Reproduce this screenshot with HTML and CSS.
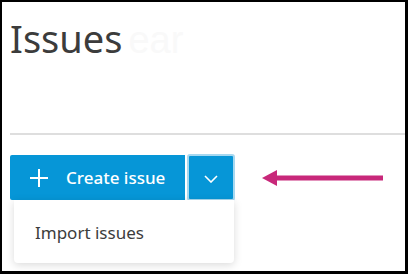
FILE: index.html
```html
<!DOCTYPE html>
<html lang="en">
<head>
  <meta charset="UTF-8">
  <title>Issues</title>
  <link rel="stylesheet" href="styles.css">
</head>
<body>
  <div class="frame">
    <header class="page-head">
      <h1>Issues<span class="ghost">ear</span></h1>
    </header>
    <div class="toolbar">
      <div class="split">
        <button class="create-btn">
          <svg width="18" height="18" viewBox="0 0 18 18"><path d="M9 0v18M0 9h18" stroke="#fff" stroke-width="2"/></svg>
          <span>Create issue</span>
        </button>
        <button class="toggle-btn">
          <svg width="14" height="8" viewBox="0 0 14 8"><path d="M1 1l6 6 6-6" fill="none" stroke="#fff" stroke-width="1.6"/></svg>
        </button>
        <div class="menu">
          <a href="#">Import issues</a>
        </div>
      </div>
      <svg class="arrow" width="121" height="16" viewBox="0 0 121 16"><path d="M14 8h107" stroke="#c8287a" stroke-width="5"/><path d="M0 8L15 0v16z" fill="#c8287a"/></svg>
    </div>
  </div>
</body>
</html>
```

FILE: styles.css
```css
* {
  margin: 0;
  padding: 0;
  box-sizing: border-box;
}

body {
  font-family: 'Noto Sans', sans-serif;
  background: #000;
}

.frame {
  width: 408px;
  height: 274px;
  border-style: solid;
  border-color: #000;
  border-width: 2px 3px 3px 2px;
  background: #fff;
  overflow: hidden;
}

.page-head {
  margin-left: 8px;
  height: 133px;
  border-bottom: 2px solid #dedede;
}

.page-head h1 {
  font-weight: 400;
  font-size: 38px;
  color: #3c3c3c;
  line-height: 40px;
  padding-top: 16px;
}

.ghost {
  color: #f9f9f9;
  margin-left: 6px;
  font-family: 'Liberation Sans', sans-serif;
}

.toolbar {
  display: flex;
  align-items: center;
  margin: 19px 0 0 8px;
}

.split {
  position: relative;
  display: flex;
  align-items: center;
  gap: 2px;
}

button {
  border: none;
  background: #0696d7;
  color: #fff;
  font-family: inherit;
  cursor: pointer;
}

.create-btn {
  display: flex;
  align-items: center;
  gap: 18px;
  height: 45px;
  width: 175px;
  padding-left: 20px;
  font-size: 17px;
  font-weight: 500;
  border-radius: 2px 0 0 2px;
}

.toggle-btn {
  display: flex;
  align-items: center;
  justify-content: center;
  width: 48px;
  height: 47px;
  border: 2px solid #a6d8f0;
  border-radius: 3px;
  padding-top: 2px;
}

.menu {
  position: absolute;
  top: 46px;
  left: 4px;
  width: 220px;
  height: 63px;
  background: #fff;
  border-radius: 0 0 4px 4px;
  box-shadow: 0 2px 8px rgba(0, 0, 0, 0.15);
  display: flex;
  align-items: center;
}

.menu a {
  color: #3c3c3c;
  text-decoration: none;
  font-size: 17px;
  padding-left: 21px;
  padding-top: 2px;
}

.arrow {
  margin-left: 27px;
  margin-top: 1px;
}
```
